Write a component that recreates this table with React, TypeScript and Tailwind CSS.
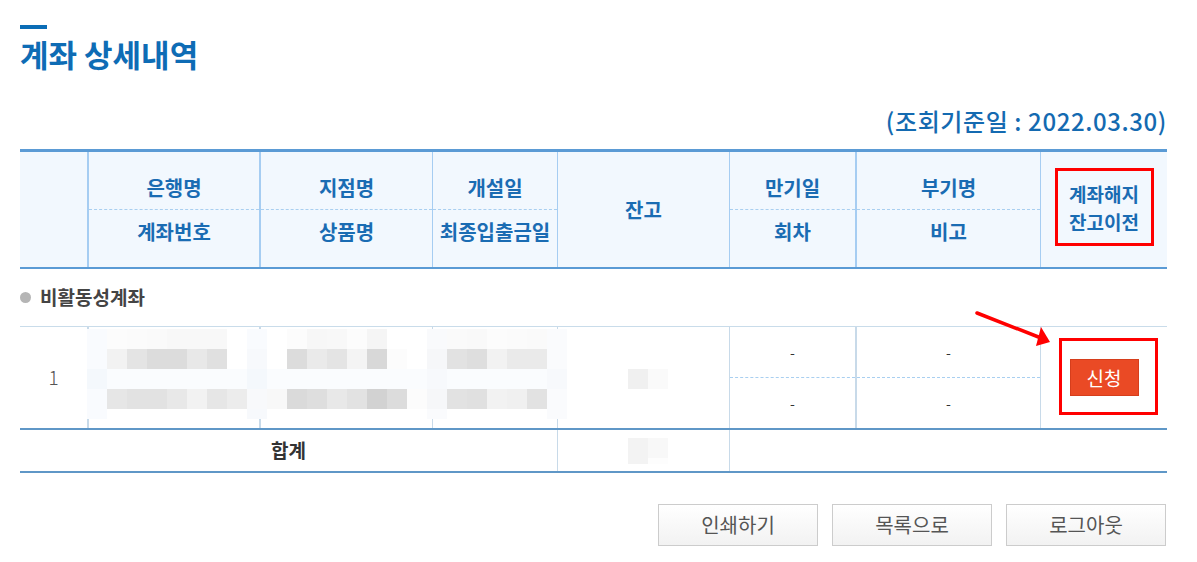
import React from 'react'

// 모자이크 처리된 계좌 정보 (20px 블록)
const mosaicRows: { h: string; cells: string[] }[] = [
  {
    h: 'h-[20px]',
    cells: [
      'bg-[#f9fbfe]', 'bg-[#fcfcfc]', 'bg-[#fbfbfb]', 'bg-[#fafafa]', 'bg-[#f8f8f8]', 'bg-[#f8f8f8]',
      'bg-[#f8f8f8]', 'bg-white', 'bg-[#f9fbfe]', 'bg-white', 'bg-[#fcfcfc]', 'bg-[#f7f7f7]',
      'bg-[#f8f8f8]', 'bg-[#fcfcfc]', 'bg-[#f5f5f5]', 'bg-white', 'bg-white', 'bg-[#f9fafc]',
      'bg-[#fafafa]', 'bg-[#f9f9f9]', 'bg-[#fcfcfc]', 'bg-[#fbfbfb]', 'bg-[#fafafa]', 'bg-[#fafbfd]',
    ],
  },
  {
    h: 'h-[20px]',
    cells: [
      'bg-[#f9fbfe]', 'bg-[#f2f2f2]', 'bg-[#e4e4e4]', 'bg-[#dcdcdc]', 'bg-[#dcdcdc]', 'bg-[#e8e8e8]',
      'bg-[#e0e0e0]', 'bg-white', 'bg-[#f7f9fc]', 'bg-white', 'bg-[#dcdcdc]', 'bg-[#eaeaea]',
      'bg-[#e4e4e4]', 'bg-[#f4f4f4]', 'bg-[#d8d8d8]', 'bg-[#fcfcfc]', 'bg-white', 'bg-[#f6f7f9]',
      'bg-[#e2e2e2]', 'bg-[#dedede]', 'bg-[#f2f2f2]', 'bg-[#eaeaea]', 'bg-[#eaeaea]', 'bg-[#fafbfd]',
    ],
  },
  {
    h: 'h-[20px]',
    cells: [
      'bg-[#f4f8fc]', 'bg-[#fafcfe]', 'bg-[#fafcfe]', 'bg-[#fafcfe]', 'bg-[#fafcfe]', 'bg-[#fafcfe]',
      'bg-[#fafcfe]', 'bg-[#fafcfe]', 'bg-[#f4f8fc]', 'bg-[#fafcfe]', 'bg-[#fafcfe]', 'bg-[#fafcfe]',
      'bg-[#fafcfe]', 'bg-[#fafcfe]', 'bg-[#fafcfe]', 'bg-[#fafcfe]', 'bg-[#fafcfe]', 'bg-[#f7f9fc]',
      'bg-[#fafcfe]', 'bg-[#fafcfe]', 'bg-[#fafcfe]', 'bg-[#fafcfe]', 'bg-[#fafcfe]', 'bg-[#f7f9fc]',
    ],
  },
  {
    h: 'h-[20px]',
    cells: [
      'bg-[#f9fbfe]', 'bg-[#e6e6e6]', 'bg-[#e2e2e2]', 'bg-[#e2e2e2]', 'bg-[#e8e8e8]', 'bg-[#f2f2f2]',
      'bg-[#e6e6e6]', 'bg-[#ececec]', 'bg-[#f8f9fb]', 'bg-[#f8f8f8]', 'bg-[#dadada]', 'bg-[#dedede]',
      'bg-[#e8e8e8]', 'bg-[#e2e2e2]', 'bg-[#d2d2d2]', 'bg-[#dcdcdc]', 'bg-[#fcfcfc]', 'bg-[#f6f7f9]',
      'bg-[#e2e2e2]', 'bg-[#e0e0e0]', 'bg-[#f2f2f2]', 'bg-[#f0f0f0]', 'bg-[#e2e2e2]', 'bg-[#fafbfd]',
    ],
  },
  {
    h: 'h-[10px]',
    cells: [
      'bg-[#f9fbfe]', 'bg-white', 'bg-white', 'bg-white', 'bg-white', 'bg-white',
      'bg-white', 'bg-white', 'bg-[#f7f9fc]', 'bg-white', 'bg-white', 'bg-white',
      'bg-white', 'bg-white', 'bg-white', 'bg-white', 'bg-white', 'bg-[#fafbfd]',
      'bg-white', 'bg-white', 'bg-white', 'bg-white', 'bg-white', 'bg-[#fafbfd]',
    ],
  },
]

function HeadTwo({ top, bottom, className }: { top: string; bottom: string; className: string }) {
  return (
    <div className={`flex flex-col pt-[15px] ${className}`}>
      <div className="h-[43px] flex items-center justify-center border-b border-dashed border-[#a9cff0]">
        {top}
      </div>
      <div className="h-[44px] flex items-center justify-center">{bottom}</div>
    </div>
  )
}

function DashCell({ className }: { className: string }) {
  return (
    <div className={`flex flex-col ${className}`}>
      <div className="h-[51px] flex items-center justify-center border-b border-dashed border-[#a9cff0] text-[14px] text-[#333]">
        -
      </div>
      <div className="flex-1 flex items-center justify-center text-[14px] text-[#333]">-</div>
    </div>
  )
}

export default function App() {
  return (
    <div className="relative w-[1197px] h-[562px] overflow-hidden bg-white font-['Noto_Sans_CJK_KR',sans-serif]">
      <div className="w-[1147px] ml-5">
        <div className="pt-[25px]">
          <div className="h-1 w-[27px] bg-[#0b6db6]" />
        </div>
        <h1 className="mt-[9px] text-[31px] leading-none font-bold text-[#0e6cb5]">계좌 상세내역</h1>
        <p className="mt-[40px] text-right text-[24px] leading-none font-medium tracking-[0.6px] text-[#146ab1]">
          (조회기준일 : 2022.03.30)
        </p>

        {/* 표 */}
        <div className="mt-[16px]">
          <div className="flex h-[120px] border-t-[3px] border-b-2 border-[#5b9bd5] bg-[#f2f8fe] text-[20px] font-bold text-[#1a6cb3]">
            <div className="w-[67px]" />
            <HeadTwo top="은행명" bottom="계좌번호" className="w-[172px] border-l-2 border-[#a6cdf2]" />
            <HeadTwo top="지점명" bottom="상품명" className="w-[173px] border-l-2 border-[#a6cdf2]" />
            <HeadTwo top="개설일" bottom="최종입출금일" className="w-[125px] border-l border-[#a6cdf2]" />
            <div className="w-[172px] border-l border-[#a6cdf2] flex items-center justify-center">잔고</div>
            <HeadTwo top="만기일" bottom="회차" className="w-[126px] border-l border-[#a6cdf2]" />
            <HeadTwo top="부기명" bottom="비고" className="w-[185px] border-l-2 border-[#a6cdf2]" />
            <div className="w-[127px] border-l border-[#a6cdf2] flex items-center justify-center pb-[6px]">
              <div className="w-[99px] h-[78px] border-[3px] border-[#ff0000] flex flex-col items-center justify-center pt-[3px] text-[19px] leading-[28px]">
                <span>계좌해지</span>
                <span>잔고이전</span>
              </div>
            </div>
          </div>

          <div className="h-[57px] flex items-center gap-[9px] text-[19px] font-bold text-[#444]">
            <span className="w-[11px] h-[11px] rounded-full bg-[#b5b5b5]" />
            비활동성계좌
          </div>

          <div className="relative flex h-[104px] border-t border-b-2 border-t-[#c9dcea] border-b-[#5f97c7]">
            <div className="w-[67px] flex items-center justify-center text-[19px] font-light text-[#555]">1</div>
            <div className="w-[172px] border-l-2 border-[#c8dae9]" />
            <div className="w-[173px] border-l-2 border-[#c8dae9]" />
            <div className="w-[125px] border-l border-[#c8dae9]" />
            <div className="w-[172px] border-l border-[#c8dae9] flex items-center justify-center pt-[3px] pl-[8px]">
              <div className="w-[20px] h-[20px] bg-[#f0f0f0]" />
              <div className="w-[20px] h-[20px] bg-[#fafafa]" />
            </div>
            <DashCell className="w-[126px] border-l border-[#c8dae9]" />
            <DashCell className="w-[185px] border-l-2 border-[#c8dae9]" />
            <div className="relative w-[127px] border-l border-[#c8dae9] flex items-center justify-center">
              <button className="w-[69px] h-[37px] bg-[#ea4a25] border border-[#d63e1c] text-white text-[19px] leading-none">
                신청
              </button>
              <div className="absolute left-[18px] top-[11px] w-[99px] h-[77px] border-[3px] border-[#ff0000]" />
            </div>

            <div className="absolute left-[67px] top-[2px] flex flex-col">
              {mosaicRows.map((row, i) => (
                <div key={i} className={`flex ${row.h}`}>
                  {row.cells.map((c, j) => (
                    <div key={j} className={`w-[20px] h-full ${c}`} />
                  ))}
                </div>
              ))}
            </div>
          </div>

          <div className="flex h-[43px] border-b-2 border-[#5f97c7]">
            <div className="w-[537px] flex items-center justify-center text-[19px] font-bold text-[#333]">합계</div>
            <div className="w-[172px] border-l border-[#c8dae9] flex items-center justify-center pl-[8px]">
              <div className="w-[20px] h-[26px] bg-[#f3f3f3]" />
              <div className="w-[20px] h-[26px] flex flex-col">
                <div className="h-[20px] bg-[#f8f8f8]" />
                <div className="flex-1 bg-[#fdfdfd]" />
              </div>
            </div>
            <div className="flex-1 border-l border-[#c8dae9]" />
          </div>
        </div>

        <div className="mt-[31px] flex justify-end gap-[14px] pr-px">
          {['인쇄하기', '목록으로', '로그아웃'].map((label) => (
            <button
              key={label}
              className="w-[160px] h-[42px] border border-[#cccccc] bg-linear-to-b from-white to-[#f2f2f2] text-[20px] text-[#555]"
            >
              {label}
            </button>
          ))}
        </div>
      </div>

      <svg className="absolute inset-0 pointer-events-none" width="1197" height="562">
        <line x1="977" y1="313" x2="1041" y2="338" stroke="#ff0000" strokeWidth="3.5" strokeLinecap="round" />
        <polygon points="1050,342 1041,327 1036,346" fill="#ff0000" />
      </svg>
    </div>
  )
}
